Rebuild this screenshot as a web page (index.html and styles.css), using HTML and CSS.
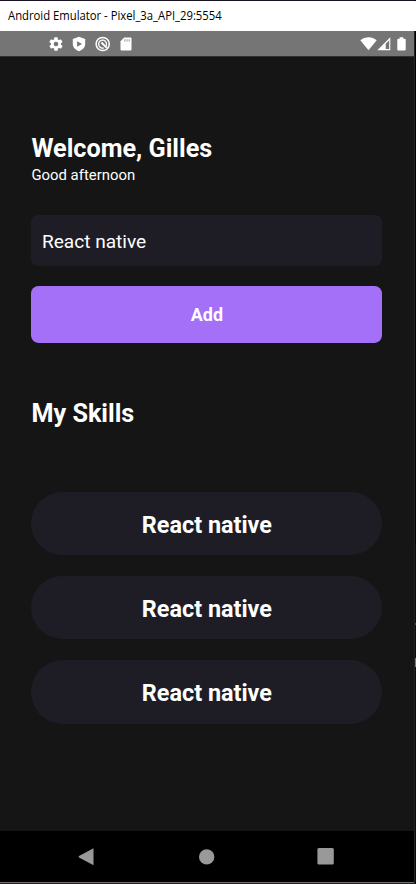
FILE: index.html
```html
<!DOCTYPE html>
<html lang="en">
<head>
<meta charset="utf-8">
<title>Android Emulator</title>
<link rel="stylesheet" href="styles.css">
</head>
<body>
<div class="window">
  <header class="titlebar"><span class="caption">Android Emulator - Pixel_3a_API_29:5554</span></header>
  <div class="statusbar">
    <svg class="gear" width="16" height="16" viewBox="0 0 24 24"><path d="M19.4 13c0-.3.1-.6.1-1s0-.7-.1-1l2.100-1.600c.2-.2.2-.4.1-.6l-2-3.500c-.1-.2-.4-.3-.6-.2l-2.500 1c-.5-.4-1.100-.7-1.700-1l-.4-2.600c0-.3-.2-.5-.5-.5h-4c-.2 0-.4.200-.5.400l-.4 2.700c-.6.200-1.100.6-1.700 1l-2.500-1c-.2-.1-.5 0-.6.200l-2 3.500c-.1.200-.1.500.1.600L4.500 11c0 .3-.1.700-.1 1s0 .7.100 1l-2.100 1.600c-.2.200-.2.400-.1.600l2 3.500c.1.200.4.300.6.200l2.500-1c.5.400 1.100.7 1.700 1l.4 2.600c0 .3.200.5.500.5h4c.3 0 .5-.2.500-.5l.4-2.600c.6-.3 1.200-.6 1.700-1l2.500 1c.2.100.5 0 .6-.2l2-3.500c.1-.2.100-.5-.1-.6L19.400 13zM12 15.500a3.500 3.500 0 1 1 0-7 3.500 3.500 0 0 1 0 7z"/></svg>
    <svg class="shield" width="16" height="16" viewBox="0 0 16 16"><path fill-rule="evenodd" d="M8 .8 14.200 3.100V8c0 3.600-2.800 6-6.200 7.300C4.600 14 1.800 11.600 1.800 8V3.100zM6.100 5.200v5.600L11 8z"/></svg>
    <svg class="circle" width="16" height="16" viewBox="0 0 16 16"><g fill="none" stroke="#fff"><circle cx="7.700" cy="8" r="6.600" stroke-width="1.500"/><path d="M11.100 10a4 4 0 1 0-2.300 1.900" stroke-width="1.300"/><path d="m6.500 6.500 5.300 5.300" stroke-width="1.900"/></g></svg>
    <svg class="card" width="12" height="14" viewBox="0 0 12 14"><path d="M4.200.5h6.300q1 0 1 1v11q0 1-1 1h-9q-1 0-1-1V4.300z"/><path fill="#757575" fill-opacity=".65" d="M4.200 2.200v2.200h1.200V2.200zm2.200 0v2.200h1.200V2.200zm2.200 0v2.200h1.200V2.200z"/></svg>
    <svg class="wifi" width="17" height="14" viewBox="0 0 17 14"><path d="M.3 3.300C5-.8 12-.8 16.700 3.300L8.500 13.200z"/></svg>
    <svg class="signal" width="14" height="14" viewBox="0 0 14 14"><path fill-rule="evenodd" d="M.3 13.200 13.300.2v13zM8.700 12.100h3.500V3.200L8.700 6.700z"/></svg>
    <svg class="battery" width="9" height="14" viewBox="0 0 9 14"><path d="M2.700.2h3.600v1.500h1.400q1 0 1 1v9.700q0 1-1 1H1.300q-1 0-1-1V2.700q0-1 1-1h1.400z"/></svg>
  </div>
  <main class="app">
    <h1 class="title">Welcome, Gilles</h1>
    <p class="greeting">Good afternoon</p>
    <div class="input">React native</div>
    <button class="add">Add</button>
    <h2 class="title skills-title">My Skills</h2>
    <div class="skills">
      <div class="skill">React native</div>
      <div class="skill">React native</div>
      <div class="skill">React native</div>
    </div>
  </main>
  <nav class="navbar">
    <svg class="back" width="16" height="18" viewBox="0 0 16 18"><path d="M15.500.3v17L1 9.500q-.7-.7 0-1.400z"/></svg>
    <svg class="home" width="16" height="16" viewBox="0 0 16 16"><circle cx="7.700" cy="7.900" r="7.700"/></svg>
    <svg class="recent" width="17" height="17" viewBox="0 0 17 17"><rect x=".4" y=".1" width="16.400" height="16.400" rx="1.500"/></svg>
  </nav>
</div>
</body>
</html>
```
FILE: styles.css
```css
* { box-sizing: border-box; margin: 0; padding: 0; }
body {
  width: 416px;
  height: 884px;
  overflow: hidden;
  background: linear-gradient(#000 0 545px, #080a14 545px 623px, #44454c 623px 625px, #080a14 625px 658px, #77777b 658px 667px, #080a14 667px 100%);
  color: #fff;
  font-family: Roboto, sans-serif;
}
svg { display: block; flex: none; fill: #fff; }
.window {
  display: flex;
  flex-direction: column;
  width: 415px;
  height: 884px;
  border-top: 1px solid #17121f;
  border-right: 1px solid #222226;
  border-bottom: 1px solid #202020;
}
.titlebar {
  height: 30px;
  margin-right: -2px;
  padding-left: 8px;
  background: #fff;
  color: #000;
  font: 12px/30px "Open Sans", sans-serif;
  white-space: nowrap;
}
.caption { display: inline-block; transform: scaleX(.94); transform-origin: left; }
.statusbar {
  display: flex;
  align-items: center;
  height: 25px;
  padding: 0 8px 0 48px;
  background: #757575;
}
.shield { margin-left: 7px; }
.circle { margin-left: 8px; }
.card { margin-left: 9px; }
.wifi { margin-left: auto; }
.signal { margin-left: 0; }
.battery { margin-left: 6px; }
.app {
  flex: 1;
  padding: 77px 31.600px 0 31.400px;
  border-top: 1px solid #303030;
  background: #151515;
}
.title { font-size: 25.200px; line-height: 30px; font-weight: 700; }
.greeting { font-size: 14.900px; line-height: 18px; margin-top: 1.500px; }
.input {
  height: 50.500px;
  margin-top: 31.700px;
  padding-left: 10.500px;
  border-radius: 7px;
  background: #1e1d26;
  font-size: 19.100px;
  line-height: 53px;
}
.add {
  display: block;
  width: 100%;
  height: 56.500px;
  margin-top: 20.500px;
  border: 0;
  border-radius: 7.400px;
  background: #a370f7;
  color: #fff;
  font: 700 17.900px/57px Roboto, sans-serif;
}
.skills-title { margin-top: 56.300px; }
.skills { display: flex; flex-direction: column; gap: 21px; margin-top: 62.700px; }
.skill {
  height: 63.400px;
  border-radius: 32px;
  background: #1e1d26;
  font-size: 23.400px;
  font-weight: 700;
  line-height: 66px;
  text-align: center;
}
.navbar {
  display: flex;
  align-items: center;
  height: 52px;
  padding-left: 78px;
  border-bottom: 1px solid #776e78;
  background: #000;
}
.navbar svg { fill: #999; }
.home { margin-left: 105px; }
.recent { margin-left: 102px; }
```
